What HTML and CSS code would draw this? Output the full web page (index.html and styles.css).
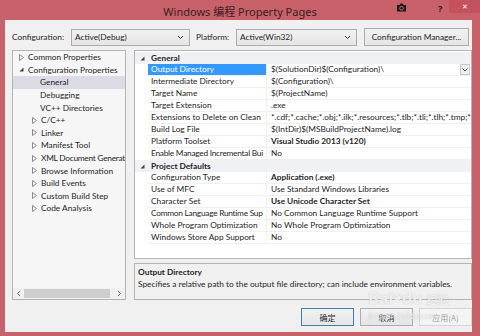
FILE: index.html
```html
<!DOCTYPE html>
<html lang="en">
<head>
    <meta charset="UTF-8">
    <title>Windows 编程 Property Pages</title>
    <link rel="stylesheet" href="styles.css">
</head>
<body>
<div class="window">
    <div class="titlebar">
        <div class="title">Windows 编程 Property Pages</div>
        <svg class="camera" width="11" height="9" viewBox="0 0 11 9">
            <path d="M1 2h2.5l1-1.5h2l1 1.5H10v6.5H1z" fill="#1a1a1a"/>
            <circle cx="5.5" cy="5.2" r="2.2" fill="#c9616a"/>
            <circle cx="5.5" cy="5.2" r="1.2" fill="#1a1a1a"/>
        </svg>
        <span class="help">?</span>
        <span class="close">&#x2715;</span>
    </div>

    <div class="client">
        <div class="toprow">
            <span class="lbl lbl-config">Configuration:</span>
            <div class="combo combo-config">Active(Debug)
                <svg class="chev" width="7" height="5" viewBox="0 0 7 5"><path d="M1 1l2.5 2.5L6 1" fill="none" stroke="#333"/></svg>
            </div>
            <span class="lbl lbl-platform">Platform:</span>
            <div class="combo combo-platform">Active(Win32)
                <svg class="chev" width="7" height="5" viewBox="0 0 7 5"><path d="M1 1l2.5 2.5L6 1" fill="none" stroke="#333"/></svg>
            </div>
            <div class="btn btn-manager">Configuration Manager...</div>
        </div>

        <div class="main">
            <div class="tree">
                <div class="tree-list">
                    <div class="node lv0"><svg class="tw" viewBox="0 0 5 7"><path d="M0.5 0.5L4.5 3.5L0.5 6.5Z" fill="none" stroke="#8c8c8c"/></svg>Common Properties</div>
                    <div class="node lv0"><svg class="tw" viewBox="0 0 5 7"><path d="M4.5 1.5V5.5H0.5Z" fill="#404040"/></svg>Configuration Properties</div>
                    <div class="node lv1 leaf selected">General</div>
                    <div class="node lv1 leaf">Debugging</div>
                    <div class="node lv1 leaf">VC++ Directories</div>
                    <div class="node lv1"><svg class="tw" viewBox="0 0 5 7"><path d="M0.5 0.5L4.5 3.5L0.5 6.5Z" fill="none" stroke="#8c8c8c"/></svg>C/C++</div>
                    <div class="node lv1"><svg class="tw" viewBox="0 0 5 7"><path d="M0.5 0.5L4.5 3.5L0.5 6.5Z" fill="none" stroke="#8c8c8c"/></svg>Linker</div>
                    <div class="node lv1"><svg class="tw" viewBox="0 0 5 7"><path d="M0.5 0.5L4.5 3.5L0.5 6.5Z" fill="none" stroke="#8c8c8c"/></svg>Manifest Tool</div>
                    <div class="node lv1 tight"><svg class="tw" viewBox="0 0 5 7"><path d="M0.5 0.5L4.5 3.5L0.5 6.5Z" fill="none" stroke="#8c8c8c"/></svg>XML Document Generat</div>
                    <div class="node lv1"><svg class="tw" viewBox="0 0 5 7"><path d="M0.5 0.5L4.5 3.5L0.5 6.5Z" fill="none" stroke="#8c8c8c"/></svg>Browse Information</div>
                    <div class="node lv1"><svg class="tw" viewBox="0 0 5 7"><path d="M0.5 0.5L4.5 3.5L0.5 6.5Z" fill="none" stroke="#8c8c8c"/></svg>Build Events</div>
                    <div class="node lv1"><svg class="tw" viewBox="0 0 5 7"><path d="M0.5 0.5L4.5 3.5L0.5 6.5Z" fill="none" stroke="#8c8c8c"/></svg>Custom Build Step</div>
                    <div class="node lv1"><svg class="tw" viewBox="0 0 5 7"><path d="M0.5 0.5L4.5 3.5L0.5 6.5Z" fill="none" stroke="#8c8c8c"/></svg>Code Analysis</div>
                </div>
                <div class="hscroll">
                    <svg class="sarrow" width="5" height="7" viewBox="0 0 5 7"><path d="M4 1L1.5 3.5L4 6" fill="none" stroke="#606060"/></svg>
                    <div class="track"><div class="thumb"></div></div>
                    <svg class="sarrow" width="5" height="7" viewBox="0 0 5 7"><path d="M1 1L3.5 3.5L1 6" fill="none" stroke="#606060"/></svg>
                </div>
            </div>

            <div class="right">
                <div class="grid">
                    <div class="cat"><svg class="tw" viewBox="0 0 5 7"><path d="M4.5 1.5V5.5H0.5Z" fill="#404040"/></svg>General</div>
                    <div class="prop sel">
                        <span class="name">Output Directory</span>
                        <span class="val"><span class="txt">$(SolutionDir)$(Configuration)\</span>
                            <span class="drop"><svg width="6" height="4" viewBox="0 0 6 4"><path d="M0.5 0.5L3 3L5.5 0.5" fill="none" stroke="#444"/></svg></span>
                        </span>
                    </div>
                    <div class="prop"><span class="name">Intermediate Directory</span><span class="val">$(Configuration)\</span></div>
                    <div class="prop"><span class="name">Target Name</span><span class="val">$(ProjectName)</span></div>
                    <div class="prop"><span class="name">Target Extension</span><span class="val">.exe</span></div>
                    <div class="prop"><span class="name">Extensions to Delete on Clean</span><span class="val">*.cdf;*.cache;*.obj;*.ilk;*.resources;*.tlb;*.tli;*.tlh;*.tmp;*</span></div>
                    <div class="prop"><span class="name">Build Log File</span><span class="val">$(IntDir)$(MSBuildProjectName).log</span></div>
                    <div class="prop"><span class="name">Platform Toolset</span><span class="val bold">Visual Studio 2013 (v120)</span></div>
                    <div class="prop"><span class="name tight">Enable Managed Incremental Bui</span><span class="val">No</span></div>
                    <div class="cat"><svg class="tw" viewBox="0 0 5 7"><path d="M4.5 1.5V5.5H0.5Z" fill="#404040"/></svg>Project Defaults</div>
                    <div class="prop"><span class="name">Configuration Type</span><span class="val bold">Application (.exe)</span></div>
                    <div class="prop"><span class="name">Use of MFC</span><span class="val">Use Standard Windows Libraries</span></div>
                    <div class="prop"><span class="name">Character Set</span><span class="val bold">Use Unicode Character Set</span></div>
                    <div class="prop"><span class="name tight">Common Language Runtime Sup</span><span class="val">No Common Language Runtime Support</span></div>
                    <div class="prop"><span class="name">Whole Program Optimization</span><span class="val">No Whole Program Optimization</span></div>
                    <div class="prop"><span class="name">Windows Store App Support</span><span class="val">No</span></div>
                </div>
                <div class="desc">
                    <div class="desc-title">Output Directory</div>
                    <div class="desc-text">Specifies a relative path to the output file directory; can include environment variables.</div>
                </div>
            </div>
        </div>

        <div class="buttons">
            <div class="btn dlg default">确定</div>
            <div class="btn dlg">取消</div>
            <div class="btn dlg disabled">应用(A)</div>
        </div>
    </div>

    <div class="watermark">
        <div class="wm-logo">Bai<span class="paw">&#x2766;</span>du <span class="wm-cn">经验</span></div>
        <div class="wm-url">jingyan.baidu.com</div>
    </div>
</div>
</body>
</html>
```

FILE: styles.css
```css
* {
    box-sizing: border-box;
}
body {
    margin: 0;
    font-family: Lato, "Noto Sans", sans-serif;
    font-size: 8.3px;
    color: #1e1e1e;
}
.window {
    position: relative;
    width: 480px;
    height: 336px;
    background-color: #c9616a;
    overflow: hidden;
}

/* title bar */
.titlebar {
    position: relative;
    height: 20px;
}
.title {
    text-align: center;
    padding-top: 3px;
    font-family: "Noto Sans", "Noto Sans CJK SC", sans-serif;
    font-size: 11px;
    color: #3a1e22;
}
.camera {
    position: absolute;
    left: 396px;
    top: 3px;
}
.help {
    position: absolute;
    left: 438px;
    top: 2px;
    font-family: "Noto Sans", sans-serif;
    font-weight: bold;
    font-size: 9px;
    color: #2a1a1a;
}
.close {
    position: absolute;
    left: 449px;
    top: 0;
    width: 31px;
    height: 13px;
    background-color: #c4525c;
    color: #fff;
    font-size: 7px;
    line-height: 13px;
    text-align: center;
}

/* dialog body */
.client {
    margin-left: 5px;
    width: 467px;
    height: 312px;
    background-color: #f0f0f0;
    padding: 8px 0 0 7px;
}
.toprow {
    display: flex;
    align-items: center;
    height: 18px;
    padding-right: 3px;
}
.lbl {
    color: #1e1e1e;
}
.lbl-config {
    width: 59px;
}
.lbl-platform {
    width: 40px;
    margin-left: 6px;
}
.combo {
    display: flex;
    align-items: center;
    justify-content: space-between;
    height: 17px;
    padding: 0 5px 0 3px;
    border: 1px solid #acacac;
    background: linear-gradient(#f2f2f2, #e5e5e5);
}
.combo-config {
    width: 119px;
}
.combo-platform {
    width: 121px;
}
.btn {
    display: flex;
    align-items: center;
    justify-content: center;
    height: 18px;
    border: 1px solid #acacac;
    background: linear-gradient(#f2f2f2, #e5e5e5);
}
.btn-manager {
    width: 105px;
    margin-left: 7px;
}

.main {
    display: flex;
    gap: 8px;
    height: 250px;
    margin-top: 4px;
    padding-right: 3px;
}

/* tree */
.tree {
    display: flex;
    flex-direction: column;
    width: 116px;
    border: 1px solid #b4b4b4;
    background-color: #f6f6f6;
}
.tree-list {
    flex: 1;
    overflow: hidden;
}
.node {
    display: flex;
    align-items: center;
    height: 12.6px;
    white-space: nowrap;
    overflow: hidden;
}
.node.lv0 {
    padding-left: 6px;
}
.node.lv1 {
    padding-left: 19px;
}
.node.leaf {
    padding-left: 27px;
}
.node.selected {
    background-color: #dadbe4;
}
.tight {
    letter-spacing: -0.25px;
}
.tw {
    width: 5px;
    height: 7px;
    margin-right: 4px;
    flex: none;
}
.hscroll {
    display: flex;
    align-items: center;
    height: 11px;
    padding: 0 3px;
    gap: 3px;
    background-color: #f0f0f0;
}
.track {
    flex: 1;
    height: 9px;
}
.thumb {
    width: 86px;
    height: 9px;
    background-color: #cdcdcd;
}

/* property grid */
.right {
    flex: 1;
    display: flex;
    flex-direction: column;
}
.grid {
    height: 209px;
    border: 1px solid #b4b4b4;
    background-color: #fff;
    padding-top: 1px;
}
.cat {
    display: flex;
    align-items: center;
    height: 12px;
    padding-left: 5px;
    background-color: #f0f1f4;
    font-weight: bold;
}
.cat .tw {
    margin-right: 6px;
}
.prop {
    display: flex;
    height: 12px;
    margin-left: 13px;
    border-bottom: 1px solid #f0f0f0;
    line-height: 11px;
}
.name {
    width: 119px;
    padding-left: 3px;
    border-right: 1px solid #f0f0f0;
    white-space: nowrap;
    overflow: hidden;
}
.val {
    flex: 1;
    display: flex;
    padding-left: 4px;
    white-space: nowrap;
    overflow: hidden;
}
.val .txt {
    flex: 1;
}
.bold {
    font-weight: bold;
}
.sel .name {
    background-color: #3399ff;
    color: #fff;
}
.drop {
    display: flex;
    align-items: center;
    justify-content: center;
    width: 10px;
    height: 11px;
    margin-right: 1px;
    border: 1px solid #c8c8c8;
    background-color: #f0f0f0;
}

.desc {
    height: 37px;
    margin-top: 4px;
    border: 1px solid #b4b4b4;
    padding: 2px 3px;
    line-height: 12px;
}
.desc-title {
    font-weight: bold;
}

/* dialog buttons */
.buttons {
    display: flex;
    justify-content: flex-end;
    gap: 6px;
    margin-top: 8px;
}
.btn.dlg {
    width: 53px;
    font-family: "Noto Sans CJK SC", sans-serif;
    font-size: 8px;
}
.btn.default {
    border-color: #3c7fb1;
}
.btn.disabled {
    border-color: #d5d5d5;
    background: #f4f4f4;
    color: #a0a0a0;
}

/* watermark overlay */
.watermark {
    position: absolute;
    left: 368px;
    top: 287px;
    color: rgba(255, 255, 255, 0.8);
    text-shadow: 0 0 1px rgba(120, 120, 120, 0.5);
    font-family: "Noto Sans", "Noto Sans CJK SC", sans-serif;
}
.wm-logo {
    font-size: 16px;
    font-weight: bold;
    line-height: 22px;
}
.wm-cn {
    font-size: 11px;
}
.paw {
    font-size: 11px;
    vertical-align: top;
}
.wm-url {
    font-size: 8px;
    line-height: 9px;
}
```
